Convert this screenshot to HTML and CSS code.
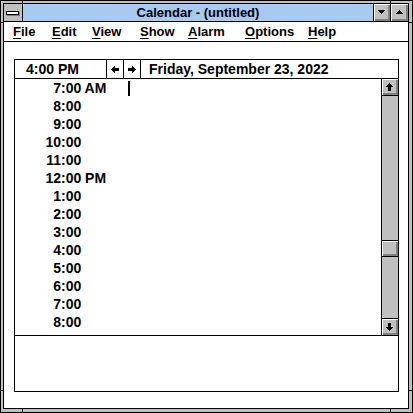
FILE: index.html
```html
<!DOCTYPE html>
<html>
<head>
<meta charset="utf-8">
<title>Calendar - (untitled)</title>
<link rel="stylesheet" href="styles.css">
</head>
<body>
<div class="window">
  <div class="frame">
    <div class="titlebar">
      <div class="sysmenu"><span class="sysbar"></span></div>
      <div class="caption">Calendar - (untitled)</div>
      <div class="tbtn tbtn-min"><svg width="7" height="4" viewBox="0 0 7 4"><polygon points="0,0 7,0 3.5,4" fill="#000"/></svg></div>
      <div class="tbtn tbtn-max"><svg width="7" height="4" viewBox="0 0 7 4"><polygon points="3.5,0 7,4 0,4" fill="#000"/></svg></div>
    </div>
    <div class="menubar">
      <span class="mi mi-file"><u>F</u>ile</span>
      <span class="mi mi-edit"><u>E</u>dit</span>
      <span class="mi mi-view"><u>V</u>iew</span>
      <span class="mi mi-show"><u>S</u>how</span>
      <span class="mi mi-alarm"><u>A</u>larm</span>
      <span class="mi mi-options"><u>O</u>ptions</span>
      <span class="mi mi-help"><u>H</u>elp</span>
    </div>
    <div class="client">
      <div class="cal">
        <div class="cal-head">
          <div class="cur-time">4:00 PM</div>
          <div class="navbtn"><svg width="8" height="9" viewBox="0 0 8 9"><path d="M0 4.5 L4 0 V3 H8 V6 H4 V9 Z" fill="#000"/></svg></div>
          <div class="navbtn"><svg width="8" height="9" viewBox="0 0 8 9"><path d="M8 4.5 L4 0 V3 H0 V6 H4 V9 Z" fill="#000"/></svg></div>
          <div class="date">Friday, September 23, 2022</div>
        </div>
        <div class="sched">
          <div class="rows">
            <div class="row"><span class="t"><span class="hr">7</span>:00 AM</span><span class="caret"></span></div>
            <div class="row"><span class="t"><span class="hr">8</span>:00</span></div>
            <div class="row"><span class="t"><span class="hr">9</span>:00</span></div>
            <div class="row"><span class="t"><span class="hr">10</span>:00</span></div>
            <div class="row"><span class="t"><span class="hr">11</span>:00</span></div>
            <div class="row"><span class="t"><span class="hr">12</span>:00 PM</span></div>
            <div class="row"><span class="t"><span class="hr">1</span>:00</span></div>
            <div class="row"><span class="t"><span class="hr">2</span>:00</span></div>
            <div class="row"><span class="t"><span class="hr">3</span>:00</span></div>
            <div class="row"><span class="t"><span class="hr">4</span>:00</span></div>
            <div class="row"><span class="t"><span class="hr">5</span>:00</span></div>
            <div class="row"><span class="t"><span class="hr">6</span>:00</span></div>
            <div class="row"><span class="t"><span class="hr">7</span>:00</span></div>
            <div class="row"><span class="t"><span class="hr">8</span>:00</span></div>
          </div>
          <div class="vscroll">
            <div class="sbtn sbtn-up"><svg width="7" height="8" viewBox="0 0 7 8"><path d="M3.5 0 L7 4 H5 V8 H2 V4 H0 Z" fill="#000"/></svg></div>
            <div class="track"><div class="thumb"></div></div>
            <div class="sbtn sbtn-down"><svg width="7" height="8" viewBox="0 0 7 8"><path d="M3.5 8 L7 4 H5 V0 H2 V4 H0 Z" fill="#000"/></svg></div>
          </div>
        </div>
        <div class="notes"></div>
      </div>
    </div>
  </div>
  <span class="notch notch-tl-h"></span>
  <span class="notch notch-tl-v"></span>
  <span class="notch notch-tr-h"></span>
  <span class="notch notch-tr-v"></span>
  <span class="notch notch-bl-h"></span>
  <span class="notch notch-bl-v"></span>
  <span class="notch notch-br-h"></span>
  <span class="notch notch-br-v"></span>
</div>
</body>
</html>
```

FILE: styles.css
```css
* { box-sizing: border-box; }
html, body { margin: 0; padding: 0; background: #fff; }
body {
  font-family: "Liberation Sans", Arial, sans-serif;
  font-weight: bold;
  font-size: 13px;
  color: #000;
}
.window {
  position: relative;
  width: 413px;
  height: 413px;
  border: 1px solid #000;
  padding: 2px 3px 3px 2px;
  background: #c0c0c0;
}
.frame {
  height: 100%;
  border: 1px solid #000;
  background: #fff;
  display: flex;
  flex-direction: column;
}
.titlebar {
  height: 18px;
  border-bottom: 1px solid #000;
  display: flex;
  flex: none;
}
.sysmenu {
  width: 19px;
  border-right: 1px solid #000;
  background: #c0c0c0;
  display: flex;
  align-items: center;
  justify-content: center;
  padding-right: 1px;
}
.sysbar {
  display: block;
  width: 13px;
  height: 4px;
  border: 1px solid #000;
  background: #fff;
  box-shadow: 1px 1px 0 #808080;
}
.caption {
  flex: 1;
  background: #a6caf0;
  text-align: center;
  line-height: 17px;
  white-space: nowrap;
}
.tbtn {
  border-left: 1px solid #000;
  background: #c0c0c0;
  box-shadow: inset 1px 1px 0 #fff, inset -2px -2px 0 #808080;
  display: flex;
  align-items: center;
  justify-content: center;
}
.tbtn svg { display: block; shape-rendering: crispEdges; }
.tbtn-min { width: 17px; padding: 0 1px 1px 0; }
.tbtn-max { width: 18px; padding: 0 1px 2px 0; }
.menubar {
  height: 20px;
  border-bottom: 1px solid #000;
  display: flex;
  align-items: center;
  padding-left: 9px;
  flex: none;
  white-space: nowrap;
}
.mi { display: block; line-height: 18px; padding-top: 1px; }
.mi u { text-decoration-thickness: 1px; text-underline-offset: 2px; }
.mi-file { width: 39px; }
.mi-edit { width: 40px; }
.mi-view { width: 48px; }
.mi-show { width: 48px; }
.mi-alarm { width: 57px; }
.mi-options { width: 63px; }
.client {
  flex: 1;
  padding: 17px 9px 0 10px;
}
.cal {
  width: 385px;
  height: 333px;
  border: 1px solid #000;
  display: flex;
  flex-direction: column;
  font-size: 14px;
}
.cal-head {
  height: 19px;
  border-bottom: 1px solid #000;
  display: flex;
  flex: none;
  line-height: 18px;
}
.cur-time {
  width: 92px;
  border-right: 1px solid #000;
  padding-left: 11px;
}
.navbtn {
  width: 17px;
  border-right: 1px solid #000;
  display: flex;
  align-items: center;
  justify-content: center;
}
.navbtn svg { display: block; shape-rendering: crispEdges; }
.date {
  flex: 1;
  padding-left: 8px;
  white-space: nowrap;
}
.sched {
  height: 257px;
  border-bottom: 1px solid #000;
  display: flex;
  flex: none;
}
.rows { flex: 1; }
.row {
  height: 18px;
  line-height: 18px;
  display: flex;
  white-space: nowrap;
}
.t { width: 113px; padding-left: 29px; }
.hr { display: inline-block; width: 17px; text-align: right; }
.caret {
  display: block;
  width: 2px;
  height: 15px;
  margin-top: 2px;
  background: #000;
}
.vscroll {
  width: 17px;
  border-left: 1px solid #000;
  display: flex;
  flex-direction: column;
  background: #c0c0c0;
}
.sbtn {
  height: 17px;
  background: #c0c0c0;
  display: flex;
  align-items: center;
  justify-content: center;
  flex: none;
}
.sbtn-up {
  border-bottom: 1px solid #000;
  box-shadow: inset 1px 1px 0 #fff, inset -2px -2px 0 #808080;
}
.sbtn-down {
  border-top: 1px solid #000;
  box-shadow: inset 1px 1px 0 #fff, inset -2px -2px 0 #808080;
}
.sbtn svg { display: block; shape-rendering: crispEdges; margin: 0 1px 1px 0; }
.track { flex: 1; }
.thumb {
  margin-top: 144px;
  height: 17px;
  border-top: 1px solid #000;
  border-bottom: 1px solid #000;
  background: #c0c0c0;
  box-shadow: inset 1px 1px 0 #fff, inset -2px -2px 0 #808080;
}
.notes { flex: 1; }
.notch { position: absolute; background: #000; display: block; }
.notch-tl-v { left: 21px; top: -1px; width: 1px; height: 4px; }
.notch-tr-v { left: 389px; top: -1px; width: 1px; height: 4px; }
.notch-bl-v { left: 21px; bottom: -1px; width: 1px; height: 5px; }
.notch-br-v { left: 389px; bottom: -1px; width: 1px; height: 5px; }
.notch-tl-h { left: -1px; top: 21px; width: 4px; height: 1px; }
.notch-bl-h { left: -1px; top: 389px; width: 4px; height: 1px; }
.notch-tr-h { right: -1px; top: 21px; width: 5px; height: 1px; }
.notch-br-h { right: -1px; top: 389px; width: 5px; height: 1px; }
```
